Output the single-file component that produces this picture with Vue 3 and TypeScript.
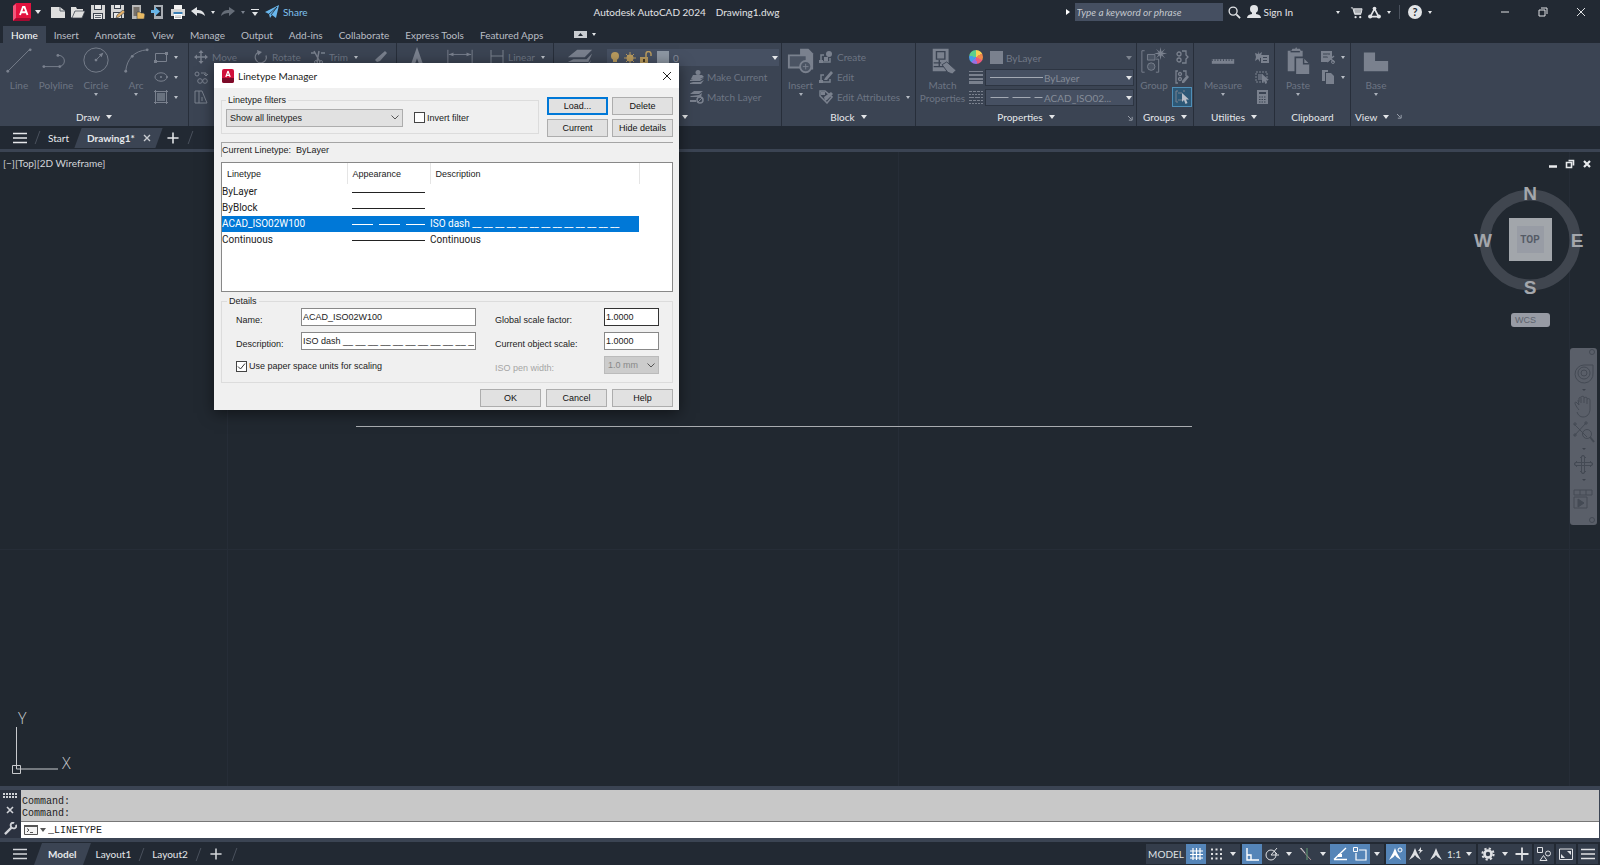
<script setup lang="ts">
import { ref } from 'vue'

interface Linetype {
  name: string
  dash: string
  description: string
}

interface StatusItem {
  kind: 'icon' | 'caret' | 'text' | 'scale' | 'gap'
  icon?: string
  label?: string
  active?: boolean
}

const menuTabs: string[] = [
  'Home', 'Insert', 'Annotate', 'View', 'Manage', 'Output',
  'Add-ins', 'Collaborate', 'Express Tools', 'Featured Apps',
]
const quickAccess: string[] = ['new', 'open', 'save', 'saveas', 'webopen', 'websave', 'print']

const linetypes: Linetype[] = [
  { name: 'ByLayer', dash: 'none', description: '' },
  { name: 'ByBlock', dash: 'none', description: '' },
  { name: 'ACAD_ISO02W100', dash: '21 6', description: 'ISO dash ' + '__ '.repeat(13) },
  { name: 'Continuous', dash: 'none', description: 'Continuous' },
]
const selected = ref('ACAD_ISO02W100')
const invert = ref(false)
const paperUnits = ref(true)
const itemName = ref('ACAD_ISO02W100')
const itemDescription = ref('ISO dash ' + '__ '.repeat(12))
const globalScale = ref('1.0000')
const objectScale = ref('1.0000')
const command = ref('_LINETYPE')
const search = ref('')

const statusItems: StatusItem[] = [
  { kind: 'text', label: 'MODEL' },
  { kind: 'icon', icon: 'grid', label: 'Grid', active: true },
  { kind: 'icon', icon: 'snap', label: 'Snap' },
  { kind: 'caret', label: 'Snap options' },
  { kind: 'gap' },
  { kind: 'icon', icon: 'ortho', label: 'Ortho', active: true },
  { kind: 'icon', icon: 'polar', label: 'Polar tracking' },
  { kind: 'caret', label: 'Polar options' },
  { kind: 'icon', icon: 'iso', label: 'Isometric drafting' },
  { kind: 'caret', label: 'Isometric options' },
  { kind: 'icon', icon: 'track', label: 'Object snap tracking', active: true },
  { kind: 'icon', icon: 'osnap', label: 'Object snap', active: true },
  { kind: 'caret', label: 'Object snap options' },
  { kind: 'gap' },
  { kind: 'icon', icon: 'annovis', label: 'Annotation visibility', active: true },
  { kind: 'icon', icon: 'annoauto', label: 'Auto scale' },
  { kind: 'icon', icon: 'anno', label: 'Annotation scale' },
  { kind: 'scale', label: '1:1' },
  { kind: 'caret', label: 'Scale options' },
  { kind: 'gap' },
  { kind: 'icon', icon: 'gear', label: 'Workspace' },
  { kind: 'caret', label: 'Workspace options' },
  { kind: 'icon', icon: 'plus', label: 'Annotation monitor' },
  { kind: 'gap' },
  { kind: 'icon', icon: 'isolate', label: 'Isolate objects' },
  { kind: 'gap' },
  { kind: 'icon', icon: 'clean', label: 'Clean screen' },
  { kind: 'gap' },
  { kind: 'icon', icon: 'menu', label: 'Customization' },
]
</script>

<template>
  <div class="app">
    <svg class="sprite" aria-hidden="true">
      <symbol id="logo" viewBox="0 0 20 18">
        <path d="M1 3 4 0h15v15l-2 3H1z" fill="#e3123f" /><path d="M1 3 4 1v14l-3 3z" fill="#f0567b" /><path d="M1 18l3-3h15l-2 3z" fill="#a50a31" />
        <path d="M8 12l3-8h1.500l3 8M9.300 9.300h5" fill="none" stroke="#fff" stroke-width="1.900" />
      </symbol>
      <symbol id="new" viewBox="0 0 14 14"><path d="M0 2h9l5 4v7H0z" fill="#dedede" /><path d="M9 2v4h5" fill="none" stroke="#59606b" /></symbol>
      <symbol id="open" viewBox="0 0 14 14"><path d="M0 2h5l1 2h6v2H4l-2 6H1L0 13z" fill="#dedede" /><path d="M4 6h10l-3 7H1z" fill="#dedede" stroke="#3a414c" stroke-width=".7" /></symbol>
      <symbol id="save" viewBox="0 0 14 14"><path d="M0 0h14v14H0z" fill="#d5d5d5" /><path d="M3 0h8v5H3zM2 8h10v6H2z" fill="#3a414c" /><path d="M4 0h6v4H4zM3 9h8v5H3z" fill="#e9e9e9" /><path d="M4 10.500h6M4 12.500h6" stroke="#59606b" /></symbol>
      <symbol id="saveas" viewBox="0 0 14 14"><path d="M0 0h13v13H0z" fill="#d5d5d5" /><path d="M3 0h7v4H3zM2 7h9v6H2z" fill="#3a414c" /><path d="M4 0h5v3H4zM3 8h7v5H3z" fill="#e9e9e9" /><path d="M5 13l1-3 6-5 2 2-6 5z" fill="#e2b06a" stroke="#3a414c" stroke-width=".6" /></symbol>
      <symbol id="webopen" viewBox="0 0 14 14"><path d="M1 0h9v14H1z" fill="#b9b9b9" /><path d="M2.500 2h6v9h-6z" fill="#77716a" /><path d="M6 7h3l1 1h3v1h1l-1 5H6z" fill="#e8b962" stroke="#3a414c" stroke-width=".6" /></symbol>
      <symbol id="websave" viewBox="0 0 14 14"><path d="M3 0h9v14H3z" fill="#a9adb3" /><path d="M5 2h5v9H5z" fill="#222933" /><path d="M0 5h4V2l5 4.500L4 11V8H0z" fill="#67b5e8" /></symbol>
      <symbol id="print" viewBox="0 0 14 14"><path d="M3 0h8v4H3z" fill="#f2f2f2" /><path d="M0 4h14v7H0z" fill="#d5d5d5" /><path d="M2.500 7h9v2h-9z" fill="#3a7fb5" /><path d="M3 9h8v5H3z" fill="#fff" /><path d="M4 11h6M4 12.500h6" stroke="#999" stroke-width=".7" /></symbol>
      <symbol id="undo" viewBox="0 0 14 14"><path d="M0 6l6-4v3c4 0 7 1 8 6-2-2-5-3-8-3v3z" fill="currentColor" /></symbol>
      <symbol id="redo" viewBox="0 0 14 14"><path d="M14 6L8 2v3C4 5 1 6 0 11c2-2 5-3 8-3v3z" fill="currentColor" /></symbol>
      <symbol id="plane" viewBox="0 0 14 14"><path d="M0 7 14 0l-3 13-4-3-2 3-1-4z" fill="#69b7ee" /><path d="m4 9 8-7-6 8" fill="none" stroke="#222933" stroke-width=".8" /></symbol>
      <symbol id="magnify" viewBox="0 0 14 14"><circle cx="5.500" cy="5.500" r="4.300" fill="none" stroke="currentColor" stroke-width="1.400" /><path d="m9 9 4 4" stroke="currentColor" stroke-width="2" /></symbol>
      <symbol id="user" viewBox="0 0 14 14"><circle cx="7" cy="4" r="4" fill="currentColor" /><path d="M5 6h4v3c3 .5 5 1.500 5 4H0c0-2.500 2-3.500 5-4z" fill="currentColor" /></symbol>
      <symbol id="cart" viewBox="0 0 14 14"><path d="M1 2h2l2 7h7M4 3h9l-1 5H5z" fill="none" stroke="currentColor" /><path d="M4 3h9l-1 5H5z" fill="currentColor" opacity=".7" /><circle cx="6" cy="12" r="1.200" fill="currentColor" /><circle cx="11" cy="12" r="1.200" fill="currentColor" /></symbol>
      <symbol id="adsk" viewBox="0 0 14 14"><path d="M7 3 2.500 11.500h9z" fill="none" stroke="currentColor" stroke-width="1.800" /><circle cx="7" cy="2.800" r="2" fill="currentColor" /><circle cx="2.300" cy="11.300" r="2.200" fill="currentColor" /><circle cx="11.700" cy="11.300" r="2.200" fill="currentColor" /></symbol>
      <symbol id="rect" viewBox="0 0 14 14"><path d="M1.500 3.500h11v8h-11z" fill="none" stroke="currentColor" /><path d="M0 10h3v3H0zM11 2h3v3h-3z" fill="currentColor" /></symbol>
      <symbol id="ellipse" viewBox="0 0 14 14"><ellipse cx="7" cy="7" rx="6" ry="4.200" fill="none" stroke="currentColor" /><circle cx="7" cy="7" r="1" fill="currentColor" /><circle cx="13" cy="7" r="1" fill="currentColor" /></symbol>
      <symbol id="hatch" viewBox="0 0 14 14"><path d="M1.500 0v14M12.500 0v14M0 1.500h14M0 12.500h14" stroke="currentColor" /><path d="M3 3h8v8H3z" fill="currentColor" opacity=".75" /></symbol>
      <symbol id="move" viewBox="0 0 14 14"><path d="M7 1v12M1 7h12" stroke="currentColor" stroke-width="1.400" /><path d="m7 0 2.500 3h-5zM7 14l2.500-3h-5zM0 7l3-2.500v5zM14 7l-3-2.500v5z" fill="currentColor" /></symbol>
      <symbol id="rotate" viewBox="0 0 14 14"><path d="M4 2.500a5.500 5.500 0 1 0 8 3" fill="none" stroke="currentColor" stroke-width="1.300" /><path d="m3 0 5 2-4 3.500z" fill="currentColor" /></symbol>
      <symbol id="trim" viewBox="0 0 14 14"><path d="M0 3h4M10 3h4M3 1l6 11M8 1 6 12" stroke="currentColor" stroke-width="1.500" fill="none" /><circle cx="5" cy="12" r="1.500" fill="none" stroke="currentColor" /><circle cx="10" cy="12" r="1.500" fill="none" stroke="currentColor" /></symbol>
      <symbol id="erase" viewBox="0 0 14 14"><path d="M12 1l2 2-7 8-3 1-2-2 2-2z" fill="currentColor" /></symbol>
      <symbol id="copy" viewBox="0 0 14 14"><g fill="none" stroke="currentColor"><circle cx="3" cy="4" r="2" /><path d="M7 3h5v3m-2-2 2 2 2-2" /><circle cx="6" cy="11" r="2.300" /><circle cx="11" cy="11" r="2.300" /></g></symbol>
      <symbol id="stretch" viewBox="0 0 14 14"><path d="M1 1h4v12H1zM5 1h3l5 12H5M8 7v4" fill="none" stroke="currentColor" /></symbol>
      <symbol id="makecur" viewBox="0 0 14 14"><circle cx="8" cy="2.500" r="2.500" fill="currentColor" /><path d="M3 5h9l2 2-4 2H1zM0 10l3-1h8l3-1-4 3H0zM0 13l3-1h7l4-2-3 4H0z" fill="currentColor" /></symbol>
      <symbol id="matchlay" viewBox="0 0 14 14"><path d="M4 1h9l-4 3H0zM1 6l8-1 3-2-1 4H0zM0 10h6v2H0z" fill="currentColor" /><circle cx="10" cy="10" r="3" fill="none" stroke="currentColor" stroke-width="1.500" /><path d="m8 12 4-4" stroke="currentColor" /></symbol>
      <symbol id="create" viewBox="0 0 14 14"><path d="M5 5H2v7h9V8" fill="none" stroke="currentColor" stroke-width="1.500" /><path d="M5 7h4v4H5z" fill="currentColor" /><circle cx="10" cy="4" r="3" fill="currentColor" /><path d="M0 10h4v3H0z" fill="currentColor" /></symbol>
      <symbol id="edit" viewBox="0 0 14 14"><path d="M5 5H2v7h9V9" fill="none" stroke="currentColor" stroke-width="1.500" /><path d="m6 8 6-7 2 2-6 7H5zM0 10h4v3H0z" fill="currentColor" /></symbol>
      <symbol id="attrs" viewBox="0 0 14 14"><path d="M1 1h5l7 6-5 6-7-7z" fill="none" stroke="currentColor" stroke-width="1.500" /><path d="m5 7 7-5 2 2-6 6-2 1zM2 2h4v3H2z" fill="currentColor" /></symbol>
      <symbol id="lweight" viewBox="0 0 14 14"><path d="M0 1.500h14" stroke="currentColor" /><path d="M0 5h14" stroke="currentColor" stroke-width="2" /><path d="M0 9h14" stroke="currentColor" stroke-width="2" /><path d="M0 12.500h14" stroke="currentColor" stroke-width="3" /></symbol>
      <symbol id="ltype" viewBox="0 0 14 14"><path d="M0 1.500h14M0 10.500h14" stroke="currentColor" stroke-dasharray="3 1" /><path d="M0 4.500h14M0 13.500h14" stroke="currentColor" stroke-dasharray="2 1" /><path d="M0 7.500h14" stroke="currentColor" stroke-dasharray="5 1" /></symbol>
      <symbol id="ungroup" viewBox="0 0 14 14"><g fill="none" stroke="currentColor" stroke-width="1.300"><circle cx="4" cy="4" r="2" /><circle cx="4" cy="10" r="2" /><path d="M7 1h4v4l2 2-2 2v4H7" /></g></symbol>
      <symbol id="groupedit" viewBox="0 0 14 14"><g fill="none" stroke="currentColor" stroke-width="1.300"><path d="M3 1H1v12h2M8 1h3v5" /><circle cx="5" cy="4" r="1.500" /><circle cx="5" cy="9" r="1.500" /></g><path d="m7 11 5-6 2 2-5 6H7z" fill="currentColor" /></symbol>
      <symbol id="groupsel" viewBox="0 0 14 14"><path d="M3 1H1v11h2M8 1h2M3 3h4M3 10h4" fill="none" stroke="currentColor" /><path d="M7 3v9l2-2 1.500 4 2-1-1.500-3.500h3z" fill="#b8bec8" /></symbol>
      <symbol id="qselect" viewBox="0 0 14 14"><path d="m3 1 1 3 3-2-1 4 3 1-4 1v4L3 9 0 11l1-4-1-4 3 1z" fill="currentColor" /><path d="M6 5h8v8H6z" fill="currentColor" /><path d="M8 7.500h4M8 10.500h4" stroke="#3b4453" /></symbol>
      <symbol id="selall" viewBox="0 0 14 14"><path d="M1 2h11v10H1z" fill="none" stroke="currentColor" stroke-dasharray="2 1" /><path d="M3 4h5v6H3z" fill="currentColor" opacity=".6" /><path d="M7 4v9l2-2 1.500 3 1.500-1-1-3h3z" fill="currentColor" /></symbol>
      <symbol id="calc" viewBox="0 0 14 14"><path d="M2 0h11v14H2z" fill="currentColor" /><path d="M4 2h7v2H4z" fill="#3b4453" /><path d="M4 7h7M4 9.500h7M4 12h7" stroke="#3b4453" stroke-dasharray="1.500 1" /></symbol>
      <symbol id="cut" viewBox="0 0 14 14"><path d="M0 1h11v7l-4 4H0z" fill="currentColor" /><path d="M2 4h7M2 7h5" stroke="#3b4453" /><path d="m6 5 7 7m0-6-7 6" stroke="currentColor" stroke-width="1.500" /><circle cx="12" cy="12" r="1.500" fill="none" stroke="currentColor" /></symbol>
      <symbol id="copyclip" viewBox="0 0 14 14"><path d="M1 0h6v2H4v9H1z" fill="currentColor" /><path d="M5 3h5l3 3v8H5z" fill="currentColor" /></symbol>
      <symbol id="grid" viewBox="0 0 14 14"><path d="M4 1v12M7.500 1v12M11 1v12M1 4h13M1 7.500h13M1 11h13" stroke="currentColor" stroke-width="1.200" /></symbol>
      <symbol id="snap" viewBox="0 0 14 14"><path d="M2 2.500h12M2 7h12M2 11.500h12" stroke="currentColor" stroke-width="2" stroke-dasharray="2 2.500" /></symbol>
      <symbol id="ortho" viewBox="0 0 14 14"><path d="M2 1v12h12M2 8h4v5" fill="none" stroke="currentColor" stroke-width="1.400" /></symbol>
      <symbol id="polar" viewBox="0 0 14 14"><circle cx="6" cy="8" r="5" fill="none" stroke="currentColor" /><path d="M14 8H6l6-7M9 4l3 3" fill="none" stroke="currentColor" /></symbol>
      <symbol id="iso" viewBox="0 0 14 14"><path d="m1 1 11 12" stroke="#a98f93" /><path d="M8 1v12" stroke="#5e9a72" /><path d="m2 1 4 5" stroke="#d0d4da" /></symbol>
      <symbol id="track" viewBox="0 0 14 14"><path d="M1 12.500h13M1 12.500 13 1" fill="none" stroke="currentColor" stroke-width="1.400" /><path d="M5 7h4v3H5z" fill="currentColor" /></symbol>
      <symbol id="osnap" viewBox="0 0 14 14"><path d="M6 3h7v10H3V6" fill="none" stroke="currentColor" stroke-width="1.200" /><path d="M.5.500h4v4h-4z" fill="none" stroke="currentColor" /></symbol>
      <symbol id="anno" viewBox="0 0 14 14"><path d="M7 1l2 5 4 7-4.500-3-1.500-2-1.500 2L1 13l4-7z" fill="currentColor" /></symbol>
      <symbol id="annovis" viewBox="0 0 14 14"><path d="M6 1l2 5 4 7-4.500-3L6 8l-1.500 2L0 13l4-7z" fill="currentColor" /><circle cx="11" cy="3" r="2" fill="none" stroke="currentColor" /></symbol>
      <symbol id="annoauto" viewBox="0 0 14 14"><path d="M6 1l2 5 4 7-4.500-3L6 8l-1.500 2L0 13l4-7z" fill="currentColor" /><path d="m12 0-3 4h2l-1 3 4-4h-2z" fill="currentColor" /></symbol>
      <symbol id="gear" viewBox="0 0 14 14"><circle cx="7" cy="7" r="3.500" fill="none" stroke="currentColor" stroke-width="2.600" /><circle cx="7" cy="7" r="5.600" fill="none" stroke="currentColor" stroke-width="2" stroke-dasharray="2.200 2.200" /></symbol>
      <symbol id="plus" viewBox="0 0 14 14"><path d="M7 .5v13M.5 7h13" stroke="currentColor" stroke-width="1.800" /></symbol>
      <symbol id="isolate" viewBox="0 0 14 14"><path d="M.5.500h5v5h-5zM3 13.500h7l-3.500-5z" fill="none" stroke="currentColor" /><circle cx="11" cy="6.500" r="2.500" fill="none" stroke="currentColor" /></symbol>
      <symbol id="clean" viewBox="0 0 14 14"><path d="M.5 2h13v10.500H.5z" fill="none" stroke="currentColor" /><path d="M8 4h4v4zM2 7v4h4z" fill="currentColor" /></symbol>
      <symbol id="menu" viewBox="0 0 14 14"><path d="M0 2.500h14M0 7h14M0 11.500h14" stroke="currentColor" stroke-width="1.600" /></symbol>
    </svg>

    <header class="titlebar">
      <div class="quick">
        <button class="logo" aria-label="Application menu"><svg><use href="#logo" /></svg></button>
        <i class="caret" />
        <button v-for="q in quickAccess" :key="q" :aria-label="q"><svg class="ic"><use :href="'#' + q" /></svg></button>
        <button aria-label="Undo"><svg class="ic"><use href="#undo" /></svg></button>
        <i class="caret small" />
        <button class="dim" aria-label="Redo"><svg class="ic"><use href="#redo" /></svg></button>
        <i class="caret small dim" />
        <button class="customize" aria-label="Customize toolbar"><i class="caret" /></button>
        <button class="share"><svg class="ic"><use href="#plane" /></svg>Share</button>
      </div>
      <h1 class="title"><span>Autodesk AutoCAD 2024</span><span>Drawing1.dwg</span></h1>
      <div class="account">
        <i class="caret-right" />
        <input v-model="search" class="search" type="text" placeholder="Type a keyword or phrase" aria-label="Search help">
        <button class="find" aria-label="Search"><svg class="ic"><use href="#magnify" /></svg></button>
        <button class="signin"><svg class="ic"><use href="#user" /></svg>Sign In</button>
        <i class="caret small" />
        <button class="cart" aria-label="Store"><svg class="ic"><use href="#cart" /></svg></button>
        <button class="apps" aria-label="Autodesk apps"><svg class="ic"><use href="#adsk" /></svg></button>
        <i class="caret small" />
        <i class="rule" />
        <button class="help" aria-label="Help">?</button>
        <i class="caret small" />
      </div>
      <div class="window-buttons">
        <button aria-label="Minimize"><svg viewBox="0 0 10 10"><path d="M1 5h8" /></svg></button>
        <button aria-label="Restore"><svg viewBox="0 0 10 10"><path d="M1 3h6v6H1zM3 1h6v6" /></svg></button>
        <button aria-label="Close"><svg viewBox="0 0 10 10"><path d="m1 1 8 8M9 1 1 9" /></svg></button>
      </div>
    </header>

    <nav class="menu">
      <button v-for="(t, i) in menuTabs" :key="t" :class="{ on: i === 0 }">{{ t }}</button>
      <button class="collapse" aria-label="Minimize ribbon"><svg viewBox="0 0 13 7"><path d="M0 0h13v7H0z" fill="#c9ccd1" /><path d="M4 5l2.500-3L9 5z" fill="#222933" /></svg></button>
      <i class="caret small" />
    </nav>

    <section class="ribbon">
      <div class="panel draw">
        <div class="tools">
          <button class="big line"><svg viewBox="0 0 30 30"><path d="M3 26 26 3" /><circle cx="3" cy="26" r="1.500" /><circle cx="27" cy="3" r="1.500" /></svg>Line</button>
          <button class="big poly"><svg viewBox="0 0 30 30"><path d="M2 21h16a5.500 5.500 0 0 0 0-12" /><circle cx="2" cy="21" r="1.500" /><circle cx="19" cy="21" r="1.500" /><circle cx="17" cy="9" r="1.500" /></svg>Polyline</button>
          <button class="big circ"><svg viewBox="0 0 30 30"><circle class="open" cx="15" cy="14" r="13" /><path d="m15 14 6-6" /><circle cx="15" cy="14" r="1.500" /><path class="solid" d="m23 6-2 5-3-3z" /></svg>Circle<i class="caret small" /></button>
          <button class="big arc"><svg viewBox="0 0 30 30"><path d="M4 26C5 13 13 4 27 3" /><circle cx="4" cy="26" r="1.500" /><circle cx="11" cy="10" r="1.500" /><circle cx="27" cy="3" r="1.500" /></svg>Arc<i class="caret small" /></button>
          <div class="stack">
            <button aria-label="Rectangle"><svg class="ic"><use href="#rect" /></svg><i class="caret small" /></button>
            <button aria-label="Ellipse"><svg class="ic"><use href="#ellipse" /></svg><i class="caret small" /></button>
            <button aria-label="Hatch"><svg class="ic"><use href="#hatch" /></svg><i class="caret small" /></button>
          </div>
        </div>
        <button class="caption">Draw<i class="caret" /></button>
      </div>

      <div class="panel modify">
        <div class="tools">
          <div class="stack first">
            <button><svg class="ic"><use href="#move" /></svg>Move</button>
            <button aria-label="Copy"><svg class="ic"><use href="#copy" /></svg></button>
            <button aria-label="Stretch"><svg class="ic"><use href="#stretch" /></svg></button>
          </div>
          <div class="stack second"><button><svg class="ic"><use href="#rotate" /></svg>Rotate</button></div>
          <div class="stack third"><button><svg class="ic"><use href="#trim" /></svg>Trim<i class="caret small" /></button></div>
          <div class="stack"><button aria-label="Erase"><svg class="ic"><use href="#erase" /></svg></button></div>
        </div>
      </div>

      <div class="panel annotation">
        <div class="tools">
          <button class="big text" aria-label="Text"><svg viewBox="0 0 30 30"><path class="thick" d="M8 26 15 6l7 20M10 20h10" /></svg></button>
          <button class="big dimension" aria-label="Dimension"><svg viewBox="0 0 30 30"><path d="M2 3v20M28 3v20M3 8h24" /><path class="solid" d="M3 8l5-2v4zM27 8l-5-2v4z" /></svg></button>
          <div class="stack"><button><svg class="ic" viewBox="0 0 14 14"><path d="M1 0v14M13 0v14M1 6h12" stroke="currentColor" /></svg>Linear<i class="caret small" /></button></div>
        </div>
      </div>

      <div class="panel layers">
        <div class="tools">
          <button class="big layer" aria-label="Layer properties"><svg viewBox="0 0 30 30"><path class="solid" d="M12 3h16l-8 8H2zM8 13h14l6-6-4 9H2zM8 19h14l5-5-4 8H2z" /></svg></button>
          <div class="layer-col">
            <button class="combo" aria-label="Current layer 0">
              <svg class="layer-icons" viewBox="2 0 46 14"><g fill="#b99b5e"><circle cx="6" cy="5" r="4" /><path d="M4 8h4v3H4z" /><circle cx="21" cy="7" r="3.500" /><path d="M21 1v12M15 7h12M17 3l8 8M25 3l-8 8" stroke="#b99b5e" /><path d="M31 6h8v7h-8z" /><path d="M37 6V3a2.500 2.500 0 0 1 5 0v2" fill="none" stroke="#b99b5e" stroke-width="1.500" /></g><path d="M34 8h2v3h-2z" fill="#4a3c20" /><path d="M4 12h4v1H4z" fill="#9aa" /></svg>
              <i class="sw" />0<i class="caret push" />
            </button>
            <div class="stack lay">
              <button><svg class="ic"><use href="#makecur" /></svg>Make Current</button>
              <button><svg class="ic"><use href="#matchlay" /></svg>Match Layer</button>
            </div>
          </div>
        </div>
        <button class="caption">Layers<i class="caret" /></button>
      </div>

      <div class="panel block">
        <div class="tools">
          <button class="big insert"><svg viewBox="0 0 30 30"><path class="solid" d="M14 2h9l5 5v17H14z" /><path class="cut" d="M2 9h19v13H2z" /><circle class="cut" cx="20" cy="21" r="6" /><path d="M17 21h6m-3-3v6" /></svg>Insert<i class="caret small" /></button>
          <div class="stack">
            <button><svg class="ic"><use href="#create" /></svg>Create</button>
            <button><svg class="ic"><use href="#edit" /></svg>Edit</button>
            <button><svg class="ic"><use href="#attrs" /></svg>Edit Attributes<i class="caret small" /></button>
          </div>
        </div>
        <button class="caption">Block<i class="caret" /></button>
      </div>

      <div class="panel props">
        <div class="tools">
          <button class="big match"><svg viewBox="0 0 30 30"><path class="solid" d="M4 2h17v15l-3 9H4z" /><path class="hole" d="M8 5h9v8H8zM5 17h8M11 14v7M5 21h11" /><path class="solid" d="M10 7h5v4h-5z" /><path class="brush" d="m14 19 5-3 10 9-4 4-5-2z" /></svg><span>Match<br>Properties</span></button>
          <div class="stack kinds">
            <span class="wheel" />
            <svg class="ic"><use href="#lweight" /></svg>
            <svg class="ic"><use href="#ltype" /></svg>
          </div>
          <div class="combos">
            <button class="combo flat"><i class="swatch" />ByLayer<i class="caret push dim" /></button>
            <button class="combo"><i class="solid-line" />ByLayer<i class="caret push" /></button>
            <button class="combo"><svg class="dash" viewBox="0 0 52 1"><path d="M0 .5h52" stroke-dasharray="18 4" /></svg>ACAD_ISO02...<i class="caret push" /></button>
          </div>
        </div>
        <button class="caption">Properties<i class="caret" /></button>
        <svg class="launch" viewBox="0 0 6 6"><path d="M0 0l4 4M5 1v4H1" /></svg>
      </div>

      <div class="panel groups">
        <div class="tools">
          <button class="big group"><svg viewBox="0 0 30 30"><path d="M5 4H2v23h3M17 13h3v14h-3" /><path class="hole2" d="M8 8h8v6H8z" /><circle class="hole2" cx="12" cy="21" r="4" /><path class="solid" d="m22 0 1 5 4-3-3 4 5 1-5 1 3 4-4-3-1 5-1-5-4 3 3-4-5-1 5-1-3-4 4 3z" /></svg>Group</button>
          <div class="stack">
            <button aria-label="Ungroup"><svg class="ic"><use href="#ungroup" /></svg></button>
            <button aria-label="Group edit"><svg class="ic"><use href="#groupedit" /></svg></button>
            <button class="lit" aria-label="Group selection"><svg class="ic"><use href="#groupsel" /></svg></button>
          </div>
        </div>
        <button class="caption">Groups<i class="caret" /></button>
      </div>

      <div class="panel utils">
        <div class="tools">
          <button class="big measure"><svg viewBox="0 0 30 30"><path class="solid" d="M3 13h24v5H3z" /><path class="ticks" d="M3 14h24" stroke-dasharray="1 2" /></svg>Measure<i class="caret small" /></button>
          <div class="stack">
            <button aria-label="Quick select"><svg class="ic"><use href="#qselect" /></svg></button>
            <button aria-label="Select all"><svg class="ic"><use href="#selall" /></svg></button>
            <button aria-label="Calculator"><svg class="ic"><use href="#calc" /></svg></button>
          </div>
        </div>
        <button class="caption">Utilities<i class="caret" /></button>
      </div>

      <div class="panel clip">
        <div class="tools">
          <button class="big paste"><svg viewBox="0 0 30 30"><path class="solid" d="M4 4h4l1-2h3l1-2 1 2h3l1 2h2v7h-8v15H4z" /><path class="hole" d="M7 5h10" /><path class="solid" d="M13 12h8l6 6v11H13z" /><path class="hole" d="M12 29V11h9M21 12v6h6" /></svg>Paste<i class="caret small" /></button>
          <div class="stack">
            <button aria-label="Cut"><svg class="ic"><use href="#cut" /></svg><i class="caret small" /></button>
            <button aria-label="Copy clip"><svg class="ic"><use href="#copyclip" /></svg><i class="caret small" /></button>
          </div>
        </div>
        <div class="caption">Clipboard</div>
      </div>

      <div class="panel view">
        <div class="tools">
          <button class="big base"><svg viewBox="0 0 30 30"><path class="solid" d="M2 6h12v9h14v11H2z" /></svg>Base<i class="caret small" /></button>
        </div>
        <button class="caption">View<i class="caret" /><svg class="go" viewBox="0 0 6 6"><path d="M0 0l4 4M5 1v4H1" /></svg></button>
      </div>
    </section>

    <nav class="files">
      <button class="burger" aria-label="File tabs menu"><svg class="ic"><use href="#menu" /></svg></button>
      <i class="slash" />
      <button class="file">Start</button>
      <button class="file current"><b>Drawing1*</b><svg viewBox="0 0 8 8"><path d="m1 1 6 6M7 1 1 7" /></svg></button>
      <button class="add" aria-label="New drawing"><svg class="ic"><use href="#plus" /></svg></button>
      <i class="slash" />
    </nav>

    <main class="canvas">
      <svg class="drawing">
        <path class="gridline" d="M227.500 0v640M898.500 0v640M1569.500 0v640M0 397.500h1600" />
        <path class="entity" d="M356 274.500h836" />
      </svg>
      <p class="viewlabel">[−][Top][2D Wireframe]</p>
      <div class="mdi">
        <button aria-label="Minimize drawing"><svg viewBox="0 0 10 10"><path d="M1 7.500h8" stroke-width="2.500" /></svg></button>
        <button aria-label="Restore drawing"><svg viewBox="0 0 10 10"><path d="M1.500 3.500h5v5h-5zM3.500 1.500h5v5" stroke-width="1.600" /></svg></button>
        <button aria-label="Close drawing"><svg viewBox="0 0 10 10"><path d="m2 2 6 6M8 2 2 8" stroke-width="2.200" /></svg></button>
      </div>
      <svg class="cube" viewBox="0 0 120 120">
        <circle cx="60" cy="60" r="45" fill="none" stroke="#40464f" stroke-width="11" />
        <path d="M39 38h43v43H39z" fill="#a2a6ab" /><path d="M47 46h27v27H47z" fill="#989ca5" />
        <text x="60" y="63" class="face">TOP</text>
        <text x="60" y="20">N</text><text x="60" y="114">S</text><text x="13" y="67">W</text><text x="107" y="67">E</text>
      </svg>
      <button class="wcs">WCS</button>
      <svg class="navbar" viewBox="0 0 27 177">
        <rect width="27" height="177" rx="3" fill="#5a5f69" />
        <g fill="none" stroke="#444a54">
          <circle cx="22" cy="4" r="2.500" /><circle cx="22" cy="172" r="2.500" />
          <path d="M14 17h9v8a9 9 0 1 1-9-8z" /><circle cx="14" cy="25" r="6" /><circle cx="14" cy="25" r="3" />
          <path d="M9 62c-4-5-5-8-3-8l3 3-1-5M9 54v-4c1-1 2-1 2 0v5m0-6c1-1 3-1 3 0v6m0-5c1-1 3-1 3 0v6m0-5c2-1 3 0 3 1v9c0 5-3 8-7 8-3 0-5-2-6-5" />
          <path d="M4 76l13 13M16 75 4 88" /><circle cx="17" cy="86" r="4.500" /><path d="m20 89 4 5" stroke-width="2" />
          <path d="M4 75h2v2H4zM15 74h2v2h-2zM4 86h2v2H4z" />
          <path d="M11.500 108h3v17h-3zM5 114.500h17v3H5zM10 110l3-3 3 3M10 123l3 3 3-3M7 113l-3 3 3 3M20 113l3 3-3 3" />
          <path d="M4 142h18v5H4zM10 142v5M16 142v5M4 149h13v11H4z" /><path d="m8 151 6 4-6 4z" fill="#444a54" />
        </g>
        <g fill="#3c424c"><path d="M12 41h4l-2 2zM12 100h4l-2 2zM12 131h4l-2 2z" /></g>
      </svg>
      <svg class="ucs" viewBox="0 0 80 70">
        <path d="M16.500 13v42H58M12.500 51.500h8v8h-8z" fill="none" stroke="#c8cacd" />
        <text x="18" y="10">Y</text><text x="62" y="55">X</text>
      </svg>
    </main>

    <section class="command">
      <div class="gutter">
        <svg class="grip" viewBox="0 0 14 5"><path d="M0 1h14M0 4h14" stroke="#d0d3d8" stroke-width="2" stroke-dasharray="2 1" /></svg>
        <button aria-label="Close command line"><svg viewBox="0 0 8 8"><path d="m1 1 6 6M7 1 1 7" /></svg></button>
        <button aria-label="Customize command line"><svg class="wrench" viewBox="0 0 14 14"><path d="M1 13 8 6" stroke-width="2.500" /><path d="M8 6C6 3 8 0 11 1M8 6c3 2 6 0 5-3" stroke-width="2" /></svg></button>
      </div>
      <div class="lines">
        <div class="history"><p>Command:</p><p>Command:</p></div>
        <div class="prompt">
          <svg viewBox="0 0 14 10"><path d="M.5.500h13v9H.5z" fill="#f4f4f4" stroke="#555" /><path d="M0 1h14" stroke="#555" stroke-width="2" /><path d="m3 3.500 2 1.500-2 2M6 7.500h3" fill="none" stroke="#555" /></svg>
          <i class="caret dark" />
          <input v-model="command" type="text" aria-label="Command">
        </div>
      </div>
    </section>

    <footer class="status">
      <button class="burger" aria-label="Layout menu"><svg class="ic"><use href="#menu" /></svg></button>
      <button class="file current"><b>Model</b></button>
      <button class="file">Layout1</button><i class="slash" />
      <button class="file">Layout2</button><i class="slash" />
      <button class="add" aria-label="New layout"><svg class="ic"><use href="#plus" /></svg></button>
      <i class="slash" />
      <div class="toggles">
        <template v-for="(s, i) in statusItems" :key="i">
          <i v-if="s.kind === 'gap'" class="gap" />
          <button v-else :class="['toggle', s.kind + '-toggle', { active: s.active }]" :aria-label="s.label">
            <svg v-if="s.icon" class="ic"><use :href="'#' + s.icon" /></svg>
            <i v-else-if="s.kind === 'caret'" class="caret" />
            <template v-else>{{ s.label }}</template>
          </button>
        </template>
      </div>
    </footer>

    <div class="dialog" role="dialog" aria-labelledby="dlg-title">
      <header>
        <svg viewBox="0 0 14 14"><rect x="1" width="12" height="14" rx="2" fill="#d0103a" /><path d="M1 9h12v3a2 2 0 0 1-2 2H3a2 2 0 0 1-2-2z" fill="#7b0a28" /><path d="M7 2 4.800 8M7 2l2.200 6M5.500 6.300h3" stroke="#fff" stroke-width="1.200" fill="none" /></svg>
        <h2 id="dlg-title">Linetype Manager</h2>
        <button aria-label="Close"><svg viewBox="0 0 10 10"><path d="m1 1 8 8M9 1 1 9" /></svg></button>
      </header>
      <div class="content">
        <div class="top">
          <fieldset class="filters">
            <legend>Linetype filters</legend>
            <select aria-label="Linetype filter"><option>Show all linetypes</option></select>
            <label><input v-model="invert" type="checkbox">Invert filter</label>
          </fieldset>
          <div class="actions">
            <button class="btn default">Load...</button><button class="btn">Delete</button>
            <button class="btn">Current</button><button class="btn">Hide details</button>
          </div>
        </div>
        <p class="currentlt">Current Linetype:&nbsp; ByLayer</p>
        <div class="list">
          <table>
            <thead><tr><th class="c1">Linetype</th><th class="c2">Appearance</th><th class="c3">Description</th></tr></thead>
            <tbody>
              <tr v-for="l in linetypes" :key="l.name" :class="{ sel: l.name === selected }" @click="selected = l.name">
                <td>{{ l.name }}</td>
                <td><svg viewBox="0 0 73 1"><path d="M0 .5h73" :stroke-dasharray="l.dash" /></svg></td>
                <td>{{ l.description }}</td>
              </tr>
            </tbody>
          </table>
        </div>
        <fieldset class="details">
          <legend>Details</legend>
          <div class="form">
            <label for="lt-name">Name:</label><input id="lt-name" v-model="itemName" type="text">
            <label for="lt-global" class="right">Global scale factor:</label><input id="lt-global" v-model="globalScale" class="strong" type="text">
            <label for="lt-desc">Description:</label><input id="lt-desc" v-model="itemDescription" type="text">
            <label for="lt-object" class="right">Current object scale:</label><input id="lt-object" v-model="objectScale" type="text">
            <label class="check"><input v-model="paperUnits" type="checkbox">Use paper space units for scaling</label>
            <label for="lt-pen" class="right off">ISO pen width:</label>
            <select id="lt-pen" disabled><option>1.0 mm</option></select>
          </div>
        </fieldset>
        <div class="buttons"><button class="btn">OK</button><button class="btn">Cancel</button><button class="btn">Help</button></div>
      </div>
    </div>
  </div>
</template>

<style>
body { margin: 0; background: #212830; }
</style>

<style scoped>
.app { position: relative; display: flex; flex-direction: column; min-height: 100vh; background: #222933; color: #d3d6da; font: 10px/14px Lato, "Open Sans", sans-serif; overflow: hidden; }
.app *, .app *::before { box-sizing: border-box; }
.sprite { position: absolute; width: 0; height: 0; }
button { margin: 0; padding: 0; border: 0; background: none; color: inherit; font: inherit; display: flex; align-items: center; white-space: nowrap; }
input, select { font: inherit; color: inherit; margin: 0; }
h1, h2, p { margin: 0; font: inherit; }
.ic { width: 14px; height: 14px; flex: none; }
.caret { flex: none; width: 0; height: 0; border: 3px solid transparent; border-top: 4px solid #e3e5e8; border-bottom: 0; }
.caret.small { border-width: 2px; border-top-width: 3px; border-bottom: 0; }
.caret.dim { border-top-color: #7b828d; }
.caret.dark { border-top-color: #555; }
.caret.push { margin-left: auto; }
.caret-right { border: 3px solid transparent; border-left: 4px solid #fff; border-right: 0; }

.titlebar { display: flex; align-items: center; height: 24px; color: #e2e4e7; }
.quick { display: flex; align-items: center; gap: 6px; padding-left: 12px; }
.logo svg { width: 20px; height: 18px; }
.quick > .caret:nth-child(2) { margin: 0 4px 0 -3px; }
.dim { color: #666d78; }
.customize { width: 8px; padding-top: 2px; border-top: 1px solid #e3e5e8; justify-content: center; }
.share { gap: 4px; color: #7fc1f0; }
.title { flex: 1; display: flex; justify-content: center; gap: 10px; }
.account { display: flex; align-items: center; }
.search { width: 148px; height: 18px; margin: 0 5px 0 5px; padding: 0 2px; border: 0; border-radius: 0; background: #454f61; font-style: italic; color: #d3d6da; }
.search::placeholder { color: #c3c7cd; opacity: 1; }
.find .ic { width: 13px; height: 13px; }
.signin { gap: 3px; margin: 0 43px 0 6px; }
.cart { margin: 0 5px 0 10px; }
.cart .ic, .apps .ic { width: 13px; height: 13px; }
.apps { margin-right: 6px; }
.rule { width: 1px; height: 14px; background: #4a515d; margin: 0 8px; }
.help { width: 14px; height: 14px; border-radius: 7px; background: #e2e4e7; color: #222933; justify-content: center; font-weight: 700; font-size: 11px; margin-right: 6px; }
.window-buttons { display: flex; padding-left: 54px; }
.window-buttons button { width: 38px; height: 24px; justify-content: center; }
.window-buttons svg { width: 10px; height: 10px; fill: none; stroke: #dfe1e4; }

.menu { display: flex; align-items: center; height: 19px; padding: 2px 3px 0; }
.menu button { height: 17px; padding: 0 8px; color: #b9bdc4; }
.menu .on { background: #3b4453; color: #fff; }
.menu .collapse { margin-left: 15px; padding: 0 5px 0 8px; }
.collapse svg { width: 13px; height: 7px; }

.ribbon { display: flex; height: 83px; background: #3b4453; color: #6d7583; }
.panel { position: relative; display: flex; flex-direction: column; flex: none; border-right: 1px solid #272e3a; padding-top: 4px; }
.draw { width: 189px; } .modify { width: 208px; } .annotation { width: 157px; } .layers { width: 228px; }
.block { width: 134px; } .props { width: 221px; } .groups { width: 57px; } .utils { width: 81px; } .clip { width: 76px; }
.panel.view { flex: 1; border-right: 0; align-items: flex-start; }
.tools { display: flex; height: 60px; }
.caption { justify-content: center; width: 100%; height: 19px; gap: 6px; color: #e6e8eb; display: flex; align-items: center; }
.view .caption { width: auto; padding-left: 4px; }
.launch, .go { width: 5px; height: 5px; fill: none; stroke: #aab0ba; }
.launch { position: absolute; right: 3px; bottom: 5px; }
.go { margin-left: 2px; }
.big { flex-direction: column; height: 60px; text-align: center; flex: none; line-height: 13px; }
.big > svg { width: 28px; height: 28px; margin-bottom: 4px; fill: none; stroke: #7a818e; flex: none; }
.big circle { fill: #7a818e; stroke: none; }
.big circle.open { fill: none; stroke: #7a818e; }
.big .solid { fill: #7a818e; stroke: none; }
.big .thick { stroke-width: 4; }
.big .cut, .big circle.cut { fill: #4b5463; stroke: #7a818e; stroke-width: 2; }
.big .hole { stroke: #3b4453; stroke-width: 1.5; }
.big .hole2, .big circle.hole2 { fill: #4b5463; stroke: #7a818e; }
.big .brush { fill: #7a818e; stroke: #3b4453; }
.big .ticks { stroke: #3b4453; stroke-width: 2; }
.line { width: 38px; } .poly { width: 36px; } .circ { width: 44px; } .arc { width: 36px; }
.big .caret { margin-top: 1px; border-top-color: #aab0ba; }
.stack { display: flex; flex-direction: column; }
.stack button { height: 20px; gap: 4px; }
.stack .ic { color: #7a818e; }
.stack .caret { border-top-color: #b9bec6; margin-left: 2px; }
.first { padding-left: 5px; width: 65px; } .second { width: 57px; } .third { width: 62px; }
.annotation .text { width: 40px; } .dimension { width: 46px; margin-right: 7px; }
.layer { width: 40px; margin-left: 6px; }
.layer-col { flex: 1; padding: 2px 2px 0 7px; }
.combo { width: 100%; height: 17px; padding: 0 1px 0 4px; background: #465062; color: #858c98; }
.layer-icons { width: 46px; height: 14px; }
.sw { width: 12px; height: 13px; background: #8d97a3; margin-right: 4px; }
.lay { padding: 1px 0 0 83px; }
.lay button { gap: 3px; }
.insert { width: 37px; }
.match { width: 53px; }
.kinds { width: 15px; gap: 6px; padding: 3px 0; }
.wheel { width: 14px; height: 14px; border-radius: 50%; background: conic-gradient(#f7d154 0 16%, #f0884a 0 32%, #ec5b7c 0 48%, #9b6fe0 0 62%, #469de8 0 78%, #5ccf8d 0); }
.combos { flex: 1; display: flex; flex-direction: column; gap: 3px; padding: 2px 2px 0 1px; }
.combos .combo { border: 1px solid #2d3542; }
.combos .flat { background: none; border-color: transparent; color: #717886; }
.swatch { width: 13px; height: 13px; background: #7a818e; margin-right: 3px; }
.solid-line { width: 53px; height: 1px; background: #a3a9b3; margin-right: 1px; }
.dash { width: 53px; height: 1px; stroke: #a3a9b3; margin-right: 1px; }
.group { width: 34px; }
.groups .stack { padding-left: 1px; }
.groups .stack button, .utils .stack button { width: 20px; justify-content: center; }
.lit { background: #2d5876; outline: 1px solid #4f8fb8; outline-offset: -1px; }
.measure { width: 58px; }
.paste { width: 46px; }
.base { width: 50px; }

.files { display: flex; align-items: center; height: 26px; padding: 0 0 0 13px; border-bottom: 3px solid #3b4453; color: #e6e8eb; }
.slash { width: 1px; height: 13px; background: #4a515d; transform: skewX(-20deg); }
.files .slash { margin-left: 10px; }
.burger { height: 20px; width: 14px; }
.file { position: relative; height: 20px; padding: 0 10px; color: #e6e8eb; }
.file b, .file svg { position: relative; }
.file svg { width: 8px; height: 8px; margin-left: 8px; stroke: #c9ccd1; stroke-width: 1.4; }
.file.current { padding: 0 11px 0 12px; margin-left: -4px; }
.file.current::before { content: ""; position: absolute; inset: 0 3px; background: #3b4453; transform: skewX(-20deg); }
.add { width: 13px; margin-left: 5px; }
.add .ic { width: 12px; height: 12px; }

.canvas { position: relative; flex: 1; background: #212830; }
.drawing { position: absolute; width: 100%; height: 100%; }
.gridline { stroke: #262d37; fill: none; }
.entity { stroke: #a9acb0; fill: none; }
.viewlabel { position: absolute; left: 3px; top: 4px; }
.mdi { position: absolute; right: 8px; top: 7px; display: flex; gap: 7px; }
.mdi svg { width: 10px; height: 10px; fill: none; stroke: #e8eaec; }
.cube { position: absolute; right: 10px; top: 28px; width: 120px; height: 120px; }
.cube text { font: 700 19px "Liberation Sans", sans-serif; fill: #a4a7ac; text-anchor: middle; }
.cube .face { font: 700 10px Roboto, sans-serif; fill: #555b66; }
.wcs { position: absolute; right: 50px; top: 161px; width: 39px; height: 14px; padding-left: 4px; border-radius: 3px; background: #979ba4; color: #5d636e; font: 9px "Liberation Sans", sans-serif; }
.navbar { position: absolute; right: 3px; top: 196px; width: 27px; height: 177px; }
.ucs { position: absolute; left: 0; bottom: 2px; width: 80px; height: 70px; overflow: visible; }
.ucs text { font: 300 16px "Open Sans", sans-serif; fill: #c8cacd; }

.command { display: flex; height: 56px; border: solid #3b4453; border-width: 4px 1px 4px 0; background: #2b3240; }
.gutter { width: 21px; display: flex; flex-direction: column; align-items: center; justify-content: space-between; padding: 3px 1px 3px 0; }
.gutter svg { width: 8px; height: 8px; fill: none; stroke: #d0d3d8; stroke-width: 1.6; }
.gutter .grip { width: 14px; height: 5px; }
.gutter .wrench { width: 13px; height: 13px; }
.lines { flex: 1; display: flex; flex-direction: column; color: #222; font: 10px/12px "Liberation Mono", monospace; }
.history { flex: 1; background: #c8c8c8; border-bottom: 1px solid #777; padding: 6px 1px 0; }
.prompt { height: 16px; display: flex; align-items: center; background: #fff; padding-left: 3px; gap: 2px; }
.prompt svg { width: 14px; height: 10px; }
.prompt input { flex: 1; border: 0; padding: 0; outline: 0; background: none; height: 16px; }

.status { display: flex; align-items: center; height: 23px; padding: 1px 2px 0 13px; }
.status > .current { margin: 0 -4px 0 8px; padding: 0 13px; }
.status > .file { height: 22px; }
.status > .add { margin-left: 11px; }
.status > .add + .slash { margin-left: 11px; }
.toggles { margin-left: auto; display: flex; align-items: center; }
.toggle { height: 20px; width: 20px; justify-content: center; background: #343d4b; color: #dfe1e4; }
.text-toggle { width: 40px; }
.scale-toggle { width: 16px; }
.caret-toggle { width: 14px; }
.toggle.active { background: #5585b8; color: #fff; }
.gap { width: 2px; }

.dialog { position: absolute; left: 214px; top: 63px; width: 465px; background: #f0f0f0; color: #222; font: 9px/12px "Liberation Sans", sans-serif; box-shadow: 0 3px 14px rgba(0, 0, 0, .5); }
.dialog header { display: flex; align-items: center; height: 25px; padding: 0 7px; background: #fff; gap: 3px; }
.dialog header > svg { width: 14px; height: 14px; }
.dialog h2 { flex: 1; font: 10px Lato, sans-serif; }
.dialog header button svg { width: 10px; height: 10px; stroke: #222; fill: none; }
.content { padding: 6px 6px 3px 7px; }
fieldset { position: relative; margin: 0; padding: 0; border: 1px solid #dcdcdc; min-width: 0; }
legend { margin-left: 5px; padding: 0 2px; line-height: 12px; }
.top { display: flex; gap: 8px; }
.filters { flex: 1; display: flex; align-items: center; height: 40px; padding: 0 4px 4px; }
.filters legend { margin-left: 0; }
.dialog select { appearance: none; border: 1px solid #adadad; border-radius: 0; background: #e1e1e1 url("data:image/svg+xml,%3Csvg xmlns='http://www.w3.org/2000/svg' viewBox='0 0 8 5'%3E%3Cpath d='m.5.5 3.500 3.500 3.500-3.500' fill='none' stroke='%23555'/%3E%3C/svg%3E") no-repeat right 3px center / 8px 5px; padding: 0 3px; height: 18px; }
.filters select { width: 177px; margin-right: 11px; }
.dialog label { display: flex; align-items: center; gap: 2px; white-space: nowrap; }
.dialog input[type="checkbox"] { appearance: none; width: 11px; height: 11px; border: 1px solid #444; background: #fff; border-radius: 0; }
.dialog input[type="checkbox"]:checked { background: #fff url("data:image/svg+xml,%3Csvg xmlns='http://www.w3.org/2000/svg' viewBox='0 0 9 9'%3E%3Cpath d='m1 4.500 2.500 2.500L8 1.500' fill='none' stroke='%23333'/%3E%3C/svg%3E"); }
.actions { display: grid; grid-template-columns: 61px 61px; grid-auto-rows: 18px; gap: 4px; padding-top: 3px; }
.btn { height: 18px; justify-content: center; background: #e1e1e1; border: 1px solid #adadad; color: #111; }
.default { border: 2px solid #0078d7; }
.currentlt { height: 15px; margin: 5px 0; border: solid #a5a5a5; border-width: 1px 0 0 1px; line-height: 14px; }
.list { height: 130px; border: 1px solid #888; background: #fff; }
table { border-collapse: collapse; table-layout: fixed; width: 417px; }
th { height: 21px; padding: 0 0 0 5px; text-align: left; font-weight: 400; border-right: 1px solid #e5e5e5; }
.c1 { width: 125px; } .c2 { width: 83px; } .c3 { width: 209px; }
td { height: 16px; padding: 0; font: 10px/16px Roboto, sans-serif; white-space: nowrap; overflow: hidden; }
td svg { display: block; width: 73px; height: 1px; margin-left: 5px; stroke: #222; }
.sel { background: #0078d7; color: #fff; }
.sel svg { stroke: #fff; }
.details { margin-top: 3px; height: 88px; }
.form { display: grid; grid-template-columns: 65px 175px 1fr 55px; grid-auto-rows: 18px; row-gap: 6px; padding: 1px 13px 0 14px; }
.form input[type="text"] { border: 1px solid #888; border-radius: 0; padding: 0 1px; height: 18px; width: 100%; background: #fff; }
.form input.strong { border-color: #333; }
.form label:not(.check) { padding-top: 6px; }
.form .right { padding-left: 19px; }
.form .check { grid-column: span 2; padding-top: 2px; }
.form label.off { color: #a5a5a5; }
.form select:disabled { background-color: #ccc; border-color: #bbb; color: #888; opacity: 1; }
.buttons { display: flex; justify-content: flex-end; gap: 5px; margin-top: 6px; }
.buttons .btn { width: 61px; }
</style>
